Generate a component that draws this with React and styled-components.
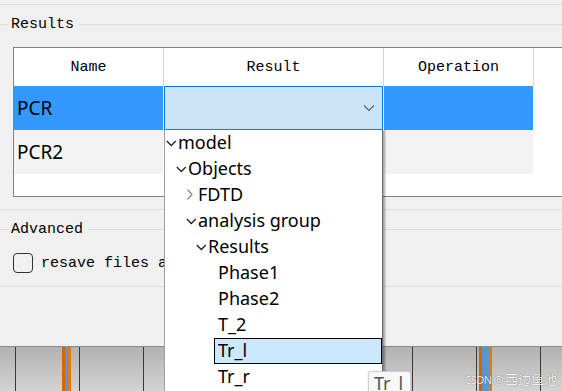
import React from 'react';
import styled, { createGlobalStyle } from 'styled-components';

const Global = createGlobalStyle`
  html, body { margin: 0; padding: 0; background: #f0f0f0; }
  body { width: 562px; height: 391px; overflow: hidden; }
`;

const Page = styled.div`
  position: relative;
  width: 562px;
  height: 391px;
  overflow: hidden;
  background: #f0f0f0;
  display: flex;
  flex-direction: column;
  font-family: "Liberation Mono", monospace;
  font-size: 15px;
  color: #000;
`;

const HLine = styled.div`
  flex-shrink: 0;
  height: 1px;
  background: #dcdcdc;
  margin-top: ${(p) => p.$mt}px;
`;

const GroupTitle = styled.div`
  flex-shrink: 0;
  display: flex;
  align-items: center;
  height: 21px;
  margin-top: 9px;
  &::before {
    content: '';
    width: 8px;
    height: 1px;
    background: #dcdcdc;
  }
  &::after {
    content: '';
    flex: 1;
    height: 1px;
    background: #dcdcdc;
  }
`;

const TitleText = styled.span`
  margin: 0 5px 0 3px;
  line-height: 21px;
`;

const TableFrame = styled.div`
  flex-shrink: 0;
  box-sizing: border-box;
  margin: 12px 0 0 13px;
  width: 560px;
  height: 150px;
  border: 1px solid #828282;
  border-right: none;
  background: #fff;
  display: flex;
  flex-direction: column;
`;

const HeaderRow = styled.div`
  display: flex;
  height: 38px;
`;

const HeaderCell = styled.div`
  box-sizing: border-box;
  width: ${(p) => p.$w}px;
  border-right: 1px solid #d5d5d5;
  display: flex;
  align-items: center;
  justify-content: center;
  padding-top: 1px;
`;

const DataRow = styled.div`
  display: flex;
  height: 44px;
`;

const tones = { sel: '#3399ff', alt: '#f3f3f3', none: 'transparent' };

const Cell = styled.div`
  box-sizing: border-box;
  width: ${(p) => p.$w}px;
  border-right: 1px solid #fff;
  background: ${(p) => tones[p.$tone || 'none']};
  display: flex;
  align-items: center;
  padding-left: 3px;
  font-family: "Noto Sans", sans-serif;
  font-size: 19px;
  color: #000;
`;

const EditorCell = styled.div`
  box-sizing: border-box;
  width: 220px;
  border-right: 1px solid #fff;
  display: flex;
`;

const Combo = styled.div`
  box-sizing: border-box;
  flex: 1;
  background: #cce4f7;
  border: 1px solid #0078d7;
  border-bottom-color: #5f7f9c;
  display: flex;
  align-items: center;
  justify-content: flex-end;
  padding-right: 7px;
`;

const CheckRow = styled.div`
  flex-shrink: 0;
  display: flex;
  align-items: center;
  gap: 8px;
  margin-top: 13px;
  padding-left: 13px;
  height: 20px;
  white-space: nowrap;
`;

const CheckBox = styled.span`
  box-sizing: border-box;
  width: 20px;
  height: 20px;
  border: 1px solid #333;
  border-radius: 4px;
  background: #f0f0f0;
`;

const Spacer = styled.div`
  flex: 1;
`;

const Strip = styled.div`
  flex-shrink: 0;
  position: relative;
  height: 45px;
  box-sizing: border-box;
  border-top: 1px solid #8c8c8c;
  background: linear-gradient(#b2b2b2, #d3d3d3);
`;

const Tick = styled.span`
  position: absolute;
  top: 0;
  bottom: 0;
  width: 1px;
  background: #3a3a3a;
`;

const Marker = styled.span`
  position: absolute;
  top: 0;
  bottom: 0;
  display: flex;
`;

const MarkerBar = styled.span`
  width: ${(p) => p.$w}px;
  background: ${(p) => p.$c};
`;

const Popup = styled.div`
  position: absolute;
  left: 164px;
  top: 130px;
  width: 219px;
  bottom: 0;
  box-sizing: border-box;
  background: #fff;
  border-left: 1px solid #a0a0a0;
  border-right: 1px solid #6e6e6e;
  box-shadow: 2px 0 2px rgba(0, 0, 0, 0.35);
  z-index: 2;
  font-family: "Noto Sans", sans-serif;
  font-size: 18px;
  color: #000;
`;

const TreeRow = styled.div`
  display: flex;
  height: 26px;
  padding-left: ${(p) => p.$level * 10 + 1}px;
`;

const Branch = styled.span`
  flex-shrink: 0;
  width: 12px;
  display: flex;
`;

const Label = styled.span`
  box-sizing: border-box;
  flex: 1;
  height: 26px;
  margin-left: -4px;
  padding-left: 3px;
  line-height: 22px;
  white-space: nowrap;
  border: 1px solid ${(p) => (p.$selected ? '#000' : 'transparent')};
  background: ${(p) => (p.$selected ? '#cce8ff' : 'transparent')};
`;

const Tooltip = styled.div`
  position: absolute;
  left: 368px;
  top: 371px;
  width: 43px;
  height: 30px;
  box-sizing: border-box;
  background: #f7f7f7;
  border: 1px solid #d0d0d0;
  border-radius: 3px;
  padding-left: 5px;
  font-family: "Noto Sans", sans-serif;
  font-size: 18px;
  line-height: 22px;
  color: #555;
  z-index: 3;
  box-shadow: 0 0 2px rgba(0, 0, 0, 0.15);
`;

const Watermark = styled.div`
  position: absolute;
  right: 5px;
  bottom: 3px;
  display: flex;
  align-items: baseline;
  font-family: "Noto Sans CJK SC", sans-serif;
  font-size: 13px;
  line-height: 16px;
  color: rgba(255, 255, 255, 0.92);
  text-shadow: 0 0 1px rgba(0, 0, 0, 0.55);
  z-index: 1;
`;

const WatermarkLatin = styled.span`
  font-family: "Noto Sans", sans-serif;
  font-size: 11px;
  letter-spacing: -0.6px;
  margin-right: 2px;
`;

const ChevronDown = ({ color = '#222' }) => (
  <svg width="12" height="26" viewBox="0 0 12 26">
    <path d="M0.8 11 L5.3 15.5 L9.8 11" fill="none" stroke={color} strokeWidth="1.3" />
  </svg>
);

const ChevronRight = () => (
  <svg width="12" height="26" viewBox="0 0 12 26">
    <path d="M1.5 7.5 L6 12.5 L1.5 17.5" fill="none" stroke="#8a8a8a" strokeWidth="1.3" />
  </svg>
);

const ComboArrow = () => (
  <svg width="12" height="8" viewBox="0 0 12 8">
    <path d="M1 1.5 L6 6.5 L11 1.5" fill="none" stroke="#606060" strokeWidth="1.1" />
  </svg>
);

const tree = [
  { label: 'model', level: 0, branch: 'open' },
  { label: 'Objects', level: 1, branch: 'open' },
  { label: 'FDTD', level: 2, branch: 'closed' },
  { label: 'analysis group', level: 2, branch: 'open' },
  { label: 'Results', level: 3, branch: 'open' },
  { label: 'Phase1', level: 4 },
  { label: 'Phase2', level: 4 },
  { label: 'T_2', level: 4 },
  { label: 'Tr_l', level: 4, selected: true },
  { label: 'Tr_r', level: 4 },
];

const ticks = [15, 79, 143, 412, 476, 540];
const markers = [
  { x: 62, parts: [[3, '#d06800'], [3, '#5b94d0'], [3, '#e07b10']] },
  { x: 479, parts: [[3, '#d06800'], [7, '#5b94d0'], [3, '#e07b10']] },
];

export default function App() {
  return (
    <>
      <Global />
      <Page>
        <HLine $mt={4} />
        <GroupTitle>
          <TitleText>Results</TitleText>
        </GroupTitle>
        <TableFrame>
          <HeaderRow>
            <HeaderCell $w={150}>Name</HeaderCell>
            <HeaderCell $w={220}>Result</HeaderCell>
            <HeaderCell $w={150}>Operation</HeaderCell>
          </HeaderRow>
          <DataRow>
            <Cell $w={150} $tone="sel">PCR</Cell>
            <EditorCell>
              <Combo>
                <ComboArrow />
              </Combo>
            </EditorCell>
            <Cell $w={150} $tone="sel" />
          </DataRow>
          <DataRow>
            <Cell $w={150} $tone="alt">PCR2</Cell>
            <Cell $w={220} $tone="alt" />
            <Cell $w={150} $tone="alt" />
          </DataRow>
        </TableFrame>
        <HLine $mt={12} />
        <GroupTitle>
          <TitleText>Advanced</TitleText>
        </GroupTitle>
        <CheckRow>
          <CheckBox />
          <span>resave files after analysis</span>
        </CheckRow>
        <HLine $mt={13} />
        <Spacer />
        <Strip>
          {ticks.map((x) => (
            <Tick key={x} style={{ left: x }} />
          ))}
          {markers.map((m) => (
            <Marker key={m.x} style={{ left: m.x }}>
              {m.parts.map(([w, c], i) => (
                <MarkerBar key={i} $w={w} $c={c} />
              ))}
            </Marker>
          ))}
        </Strip>
        <Watermark>
          <WatermarkLatin>CSDN @</WatermarkLatin>西边鱼池
        </Watermark>
        <Popup>
          {tree.map((t) => (
            <TreeRow key={t.label} $level={t.level}>
              <Branch>
                {t.branch === 'open' && <ChevronDown />}
                {t.branch === 'closed' && <ChevronRight />}
              </Branch>
              <Label $selected={t.selected}>{t.label}</Label>
            </TreeRow>
          ))}
        </Popup>
        <Tooltip>Tr_l</Tooltip>
      </Page>
    </>
  );
}
